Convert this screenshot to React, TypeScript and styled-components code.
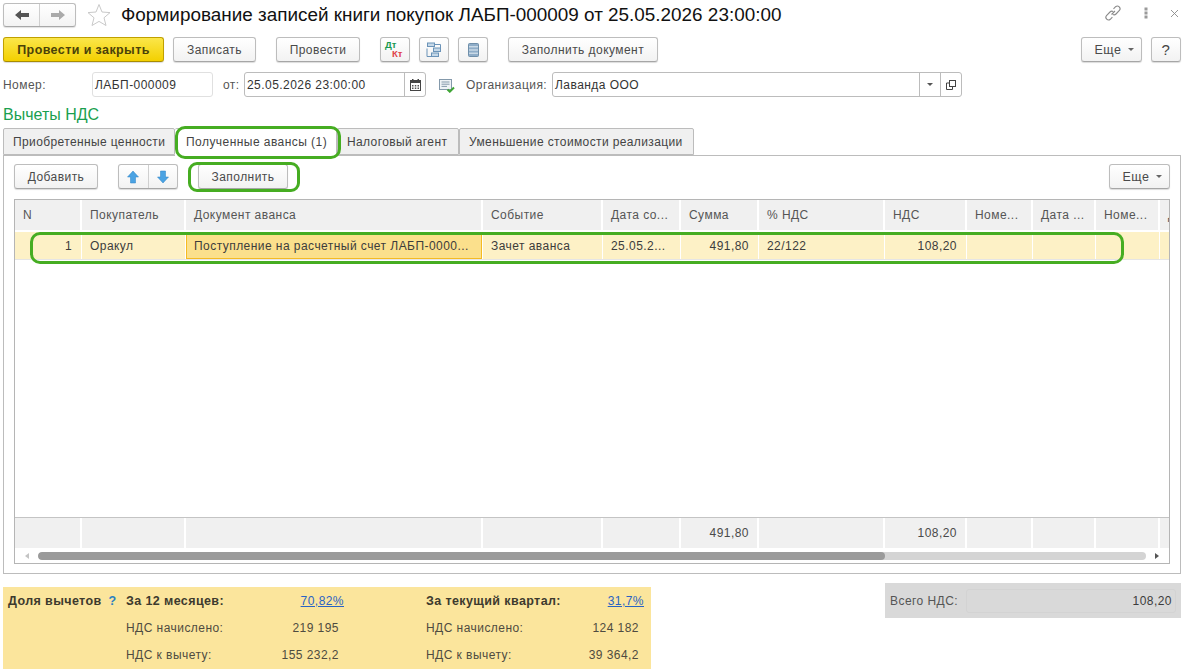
import React from "react";
import styled, { createGlobalStyle } from "styled-components";

const Global = createGlobalStyle`
  html, body { margin: 0; padding: 0; background: #fff; }
  body { font-family: "Liberation Sans", Arial, sans-serif; font-size: 12px; color: #4a4a4a; }
  * { box-sizing: border-box; }
`;

const Page = styled.div`
  position: relative;
  width: 1187px;
  height: 672px;
  overflow: hidden;
  padding: 3px 6px 0 3px;
`;

const TitleBar = styled.div`
  display: flex;
  align-items: center;
  height: 23px;
`;
const NavGroup = styled.div`
  display: flex;
  flex: none;
  width: 73px;
  height: 24px;
  border: 1px solid #bdbdbd;
  border-bottom-color: #a8a8a8;
  border-radius: 3px;
  background: linear-gradient(#fff, #f3f3f3);
  box-shadow: 0 1px 1px rgba(0, 0, 0, 0.12);
`;
const NavCell = styled.div<{ $divider?: boolean }>`
  flex: 1;
  display: flex;
  align-items: center;
  justify-content: center;
  border-left: ${(p) => (p.$divider ? "1px solid #cfcfcf" : "none")};
`;
const StarWrap = styled.div`
  display: flex;
  flex: none;
  margin-left: 11px;
  width: 24px;
`;
const Title = styled.h1`
  margin: 0 0 0 10px;
  font-size: 18.9px;
  font-weight: 400;
  color: #111;
  white-space: nowrap;
  flex: 1;
`;
const WindowIcons = styled.div`
  display: flex;
  align-items: center;
  gap: 22px;
  margin-right: 2px;
  margin-top: -3px;
`;

const Toolbar = styled.div`
  display: flex;
  align-items: flex-start;
  margin-top: 11px;
  height: 25px;
`;
const Btn = styled.div<{ $w: number; $ml?: number; $primary?: boolean }>`
  display: flex;
  align-items: center;
  justify-content: center;
  flex: none;
  width: ${(p) => p.$w}px;
  height: 25px;
  margin-left: ${(p) => p.$ml ?? 0}px;
  border: 1px solid ${(p) => (p.$primary ? "#c0a000" : "#bdbdbd")};
  border-bottom-color: ${(p) => (p.$primary ? "#a88c00" : "#a6a6a6")};
  border-radius: 3px;
  background: ${(p) => (p.$primary ? "linear-gradient(#fbe64a, #f3d000)" : "linear-gradient(#fff, #f2f2f2)")};
  box-shadow: 0 1px 1px rgba(0, 0, 0, 0.14);
  color: ${(p) => (p.$primary ? "#4a4209" : "#4a4a4a")};
  font-weight: ${(p) => (p.$primary ? 700 : 400)};
  font-size: ${(p) => (p.$primary ? 12.5 : 12)}px;
  letter-spacing: ${(p) => (p.$primary ? 0.4 : 0.45)}px;
  white-space: nowrap;
`;
const MoreLabel = styled.span`
  margin-left: 5px;
  font-size: 12.5px;
  letter-spacing: 0.6px;
`;
const Help = styled.span`
  font-size: 15px;
  color: #444;
`;
const Spacer = styled.div`
  flex: 1;
`;
const Caret = styled.span`
  display: inline-block;
  margin-left: 6px;
  width: 0;
  height: 0;
  border-left: 3px solid transparent;
  border-right: 3px solid transparent;
  border-top: 3px solid #666;
`;
const DtKt = styled.div`
  position: relative;
  width: 24px;
  height: 21px;
  font-weight: 700;
  font-size: 9.5px;
  line-height: 9px;
  letter-spacing: 0;
`;
const Dt = styled.span`
  position: absolute;
  left: 2px;
  top: 1px;
  color: #1a9a50;
`;
const Kt = styled.span`
  position: absolute;
  left: 9px;
  top: 10px;
  color: #e0434b;
`;

const FormRow = styled.div`
  display: flex;
  align-items: center;
  margin-top: 10px;
  height: 25px;
`;
const Label = styled.span<{ $w?: number; $ml?: number }>`
  flex: none;
  width: ${(p) => (p.$w ? `${p.$w}px` : "auto")};
  margin-left: ${(p) => p.$ml ?? 0}px;
  color: #555;
  letter-spacing: 0.45px;
  white-space: nowrap;
`;
const Input = styled.div<{ $w: number; $muted?: boolean }>`
  display: flex;
  align-items: stretch;
  flex: none;
  width: ${(p) => p.$w}px;
  height: 25px;
  border: 1px solid ${(p) => (p.$muted ? "#e0e0e0" : "#bcbcbc")};
  border-radius: 3px;
  background: #fff;
  color: #333;
  letter-spacing: 0.45px;
`;
const InputText = styled.div`
  flex: 1;
  display: flex;
  align-items: center;
  padding-left: 2px;
`;
const InputBtn = styled.div`
  flex: none;
  width: 21px;
  display: flex;
  align-items: center;
  justify-content: center;
  border-left: 1px solid #bcbcbc;
`;
const ArrowDown = styled(Caret)`
  margin: 0;
  border-top-color: #555;
`;
const IconSlot = styled.div`
  display: flex;
  flex: none;
  width: 16px;
  margin-left: 13px;
  margin-top: 2px;
`;

const Section = styled.div`
  margin-top: 8px;
  height: 23px;
  color: #1a9f4f;
  font-size: 16px;
  line-height: 20px;
`;
const Tabs = styled.div`
  display: flex;
  height: 27px;
`;
const Tab = styled.div<{ $w: number; $active?: boolean }>`
  flex: none;
  width: ${(p) => p.$w}px;
  height: ${(p) => (p.$active ? 28 : 27)}px;
  display: flex;
  align-items: center;
  padding-left: ${(p) => (p.$active ? 11 : 9)}px;
  border: 1px solid #bcbcbc;
  border-left-width: ${(p) => (p.$active ? 0 : 1)}px;
  border-bottom-color: ${(p) => (p.$active ? "#fff" : "#bcbcbc")};
  border-radius: 2px 2px 0 0;
  background: ${(p) => (p.$active ? "#fff" : "#f0f0f0")};
  color: #444;
  letter-spacing: ${(p) => (p.$active ? 0.45 : 0.38)}px;
  position: relative;
  z-index: ${(p) => (p.$active ? 1 : 0)};
  white-space: nowrap;
`;
const Panel = styled.div`
  width: 1178px;
  height: 419px;
  border: 1px solid #bcbcbc;
  padding: 8px 10px 9px;
  display: flex;
  flex-direction: column;
`;
const PanelBar = styled.div`
  display: flex;
  height: 26px;
  flex: none;
`;
const SplitCell = styled.div<{ $divider?: boolean }>`
  flex: 1;
  height: 100%;
  display: flex;
  align-items: center;
  justify-content: center;
  border-left: ${(p) => (p.$divider ? "1px solid #cfcfcf" : "none")};
`;

const TableBox = styled.div`
  margin-top: 9px;
  flex: 1;
  display: flex;
  flex-direction: column;
  border: 1px solid #b5b5b5;
  overflow: hidden;
  min-height: 0;
`;
const COLS = "67px 104px 297px 120px 78px 78px 126px 82px 66px 63px 64px 11px";
const HeadRow = styled.div`
  display: grid;
  grid-template-columns: ${COLS};
  height: 30px;
  flex: none;
`;
const HeadCell = styled.div`
  background: #f0f0f0;
  border-right: 2px solid #fff;
  display: flex;
  align-items: center;
  padding-left: 8px;
  color: #555;
  letter-spacing: 0.45px;
  white-space: nowrap;
  overflow: hidden;
`;
const BodyRow = styled.div`
  display: grid;
  grid-template-columns: ${COLS};
  height: 28px;
  flex: none;
  border-bottom: 1px solid #e5e5e5;
  margin-top: 2px;
`;
const Cell = styled.div<{ $right?: boolean; $current?: boolean }>`
  display: flex;
  align-items: center;
  justify-content: ${(p) => (p.$right ? "flex-end" : "flex-start")};
  padding: 0 ${(p) => (p.$right ? 9 : 6)}px 0 ${(p) => (p.$current ? 7 : 8)}px;
  margin-right: ${(p) => (p.$current ? 1 : 0)}px;
  background: ${(p) => (p.$current ? "#fbe08c" : "#fdf1c6")};
  border: ${(p) => (p.$current ? "1px solid #f5bb22" : "none")};
  border-right: ${(p) => (p.$current ? "1px solid #f5bb22" : "1px solid #fff")};
  color: #3c3c3c;
  letter-spacing: 0.45px;
  white-space: nowrap;
  overflow: hidden;
`;
const BodyFill = styled.div`
  flex: 1;
  background: #fff;
  border-bottom: 1px solid #c4c4c4;
`;
const FootRow = styled.div`
  display: grid;
  grid-template-columns: ${COLS};
  height: 30px;
  flex: none;
`;
const FootCell = styled.div`
  background: #f0f0f0;
  border-right: 2px solid #fff;
  display: flex;
  align-items: center;
  justify-content: flex-end;
  padding-right: 8px;
  letter-spacing: 0.45px;
  color: #4a4a4a;
`;
const ScrollRow = styled.div`
  flex: none;
  height: 15px;
  display: flex;
  align-items: center;
  padding: 0 10px;
`;
const Track = styled.div`
  flex: 1;
  height: 8px;
  margin: 0 9px;
  background: #d4d4d4;
  border-radius: 4px;
  overflow: hidden;
`;
const Thumb = styled.div`
  height: 100%;
  background: #9a9a9a;
  border-radius: 4px;
`;
const ArrowL = styled.div`
  width: 0;
  height: 0;
  border-top: 3px solid transparent;
  border-bottom: 3px solid transparent;
  border-right: 4px solid #c4c4c4;
`;
const ArrowR = styled.div`
  width: 0;
  height: 0;
  border-top: 3px solid transparent;
  border-bottom: 3px solid transparent;
  border-left: 4px solid #555;
`;

const Bottom = styled.div`
  display: flex;
  align-items: flex-start;
  margin-top: 9px;
`;
const Shares = styled.div`
  width: 648px;
  height: 82px;
  margin-top: 4px;
  background: #fbe59c;
  display: grid;
  grid-template-columns: 123px 218px 82px 218px;
  grid-auto-rows: 27px;
  letter-spacing: 0.45px;
`;
const SCell = styled.div<{ $bold?: boolean; $right?: boolean }>`
  display: flex;
  align-items: center;
  justify-content: ${(p) => (p.$right ? "flex-end" : "flex-start")};
  font-weight: ${(p) => (p.$bold ? 700 : 400)};
  font-size: ${(p) => (p.$bold ? 12.5 : 12)}px;
  letter-spacing: ${(p) => (p.$bold ? 0.4 : 0.45)}px;
  color: ${(p) => (p.$bold ? "#3d3a2e" : "#4e4b40")};
  white-space: nowrap;
`;
const ShareHead = styled(SCell)`
  padding-left: 5px;
`;
const Q = styled.span`
  margin-left: 7px;
  color: #2a7fc0;
  font-weight: 700;
`;
const Pair = styled.div`
  display: grid;
  grid-template-columns: 1fr auto;
  padding-right: 5px;
`;
const LinkPair = styled(Pair)`
  padding-right: 0;
`;
const Lnk = styled.a`
  color: #2a63c4;
  text-decoration: underline;
  align-self: center;
`;
const Total = styled.div`
  margin-left: auto;
  width: 296px;
  height: 35px;
  background: #d9d9d9;
  display: flex;
  align-items: center;
  padding: 0 5px;
  color: #555;
  letter-spacing: 0.45px;
`;
const TotalLabel = styled.span`
  flex: none;
  width: 76px;
  white-space: nowrap;
`;
const TotalValue = styled.div`
  flex: 1;
  height: 24px;
  border: 1px solid #d3d3d3;
  border-radius: 3px;
  display: flex;
  align-items: center;
  justify-content: flex-end;
  padding-right: 3px;
  color: #3c3c3c;
`;

const Mark = styled.div<{ $l: number; $t: number; $w: number; $h: number; $r: number }>`
  position: absolute;
  left: ${(p) => p.$l}px;
  top: ${(p) => p.$t}px;
  width: ${(p) => p.$w}px;
  height: ${(p) => p.$h}px;
  border: 3px solid #46ad22;
  border-radius: ${(p) => p.$r}px;
  pointer-events: none;
  z-index: 3;
`;

const ArrowLeftIcon = ({ c }: { c: string }) => (
  <svg width="16" height="12" viewBox="0 0 16 12">
    <path d="M1 6 L7 1 V4 H15 V8 H7 V11 Z" fill={c} />
  </svg>
);
const ArrowRightIcon = ({ c }: { c: string }) => (
  <svg width="16" height="12" viewBox="0 0 16 12">
    <path d="M15 6 L9 1 V4 H1 V8 H9 V11 Z" fill={c} />
  </svg>
);
const StarIcon = () => (
  <svg width="24" height="24" viewBox="0 0 24 24">
    <path d="M12 1.5 L15 9 L23 9.6 L17 14.8 L19 22.5 L12 18.4 L5 22.5 L7 14.8 L1 9.6 L9 9 Z" fill="#fff" stroke="#c9c9c9" />
  </svg>
);
const LinkIcon = () => (
  <svg width="18" height="18" viewBox="0 0 18 18" fill="none" stroke="#8a8a8a" strokeWidth="1.1">
    <path d="M7.5 10.5 L11 7" />
    <path d="M9.5 4.8 L11.6 2.7 a2.7 2.7 0 0 1 3.8 3.8 L12 10 a2.7 2.7 0 0 1 -3.3 .4" />
    <path d="M8.4 13.2 L6.3 15.3 a2.7 2.7 0 0 1 -3.8 -3.8 L6 8 a2.7 2.7 0 0 1 3.3 -.4" />
  </svg>
);
const DotsIcon = () => (
  <svg width="4" height="12" viewBox="0 0 4 12" fill="#9a9a9a">
    <rect x="0.5" y="0.5" width="3" height="3" />
    <rect x="0.5" y="4.5" width="3" height="3" />
    <rect x="0.5" y="8.5" width="3" height="3" />
  </svg>
);
const CloseIcon = () => (
  <svg width="9" height="9" viewBox="0 0 9 9" stroke="#8a8a8a" strokeWidth="0.9">
    <path d="M1 1 L8 8 M8 1 L1 8" />
  </svg>
);
const StructureIcon = () => (
  <svg width="16" height="16" viewBox="0 0 16 16" fill="none">
    <rect x="1.5" y="1" width="7" height="3.5" fill="#c5d8e8" stroke="#6b93b8" />
    <rect x="7.5" y="6" width="7" height="3.5" fill="#c5d8e8" stroke="#6b93b8" />
    <rect x="5.5" y="11" width="7" height="3.5" fill="#c5d8e8" stroke="#6b93b8" />
    <path d="M8.5 2.5 H14.5 V6 M1 6.5 V14.5 H5" stroke="#6b93b8" />
  </svg>
);
const ListIcon = () => (
  <svg width="11" height="14" viewBox="0 0 11 14">
    <rect x="0.5" y="0.5" width="10" height="13" rx="1" fill="#8fadc8" stroke="#6f8faa" />
    <path d="M1 3.8 H10 M1 7 H10 M1 10.2 H10" stroke="#e4edf4" />
  </svg>
);
const CalendarIcon = () => (
  <svg width="11" height="12" viewBox="0 0 11 12">
    <rect x="0.5" y="1.5" width="10" height="10" fill="#fff" stroke="#444" />
    <rect x="0" y="1" width="11" height="3" fill="#444" />
    <rect x="2" y="0" width="1.5" height="2" fill="#444" />
    <rect x="7.5" y="0" width="1.5" height="2" fill="#444" />
    <path d="M2 6h1.5v1.5H2zM4.8 6h1.5v1.5H4.8zM7.5 6H9v1.5H7.5zM2 8.5h1.5V10H2zM4.8 8.5h1.5V10H4.8zM7.5 8.5H9V10H7.5z" fill="#555" />
  </svg>
);
const DocCheckIcon = () => (
  <svg width="16" height="14" viewBox="0 0 16 14">
    <rect x="0.5" y="0.5" width="12" height="10" fill="#eef2f6" stroke="#8499ab" />
    <path d="M2.5 3 H10.5 M2.5 5.2 H10.5 M2.5 7.4 H8" stroke="#8499ab" />
    <path d="M8.5 10.5 L10.8 12.7 L15 8.5" fill="none" stroke="#3fa535" strokeWidth="2" />
  </svg>
);
const OpenIcon = () => (
  <svg width="10" height="10" viewBox="0 0 10 10" fill="none" stroke="#444">
    <rect x="3.5" y="0.5" width="6" height="6" />
    <path d="M3.5 3 H0.5 V9.5 H6.5 V6.5" />
  </svg>
);
const UpIcon = () => (
  <svg width="12" height="14" viewBox="0 0 12 14">
    <path d="M6 1 L11.5 7 H8.5 V13 H3.5 V7 H0.5 Z" fill="#4ba3e3" stroke="#2d82c4" strokeWidth="0.5" />
  </svg>
);
const DownIcon = () => (
  <svg width="12" height="14" viewBox="0 0 12 14">
    <path d="M6 13 L11.5 7 H8.5 V1 H3.5 V7 H0.5 Z" fill="#4ba3e3" stroke="#2d82c4" strokeWidth="0.5" />
  </svg>
);

const heads = ["N", "Покупатель", "Документ аванса", "Событие", "Дата со...", "Сумма", "% НДС", "НДС", "Номе...", "Дата ...", "Номе...", "Д"];

export default function App() {
  return (
    <Page>
      <Global />
      <TitleBar>
        <NavGroup>
          <NavCell><ArrowLeftIcon c="#555" /></NavCell>
          <NavCell $divider><ArrowRightIcon c="#aaa" /></NavCell>
        </NavGroup>
        <StarWrap><StarIcon /></StarWrap>
        <Title>Формирование записей книги покупок ЛАБП-000009 от 25.05.2026 23:00:00</Title>
        <WindowIcons>
          <LinkIcon />
          <DotsIcon />
          <CloseIcon />
        </WindowIcons>
      </TitleBar>

      <Toolbar>
        <Btn $primary $w={161}>Провести и закрыть</Btn>
        <Btn $w={83} $ml={9}>Записать</Btn>
        <Btn $w={84} $ml={20}>Провести</Btn>
        <Btn $w={30} $ml={20}>
          <DtKt><Dt>Дт</Dt><Kt>Кт</Kt></DtKt>
        </Btn>
        <Btn $w={30} $ml={9}><StructureIcon /></Btn>
        <Btn $w={30} $ml={9}><ListIcon /></Btn>
        <Btn $w={150} $ml={20}>Заполнить документ</Btn>
        <Spacer />
        <Btn $w={61}><MoreLabel>Еще</MoreLabel><Caret /></Btn>
        <Btn $w={30} $ml={9}><Help>?</Help></Btn>
      </Toolbar>

      <FormRow>
        <Label $w={89}>Номер:</Label>
        <Input $w={121} $muted><InputText>ЛАБП-000009</InputText></Input>
        <Label $ml={10} $w={21}>от:</Label>
        <Input $w={182}>
          <InputText>25.05.2026 23:00:00</InputText>
          <InputBtn><CalendarIcon /></InputBtn>
        </Input>
        <IconSlot><DocCheckIcon /></IconSlot>
        <Label $ml={11} $w={86}>Организация:</Label>
        <Input $w={410}>
          <InputText>Лаванда ООО</InputText>
          <InputBtn><ArrowDown /></InputBtn>
          <InputBtn><OpenIcon /></InputBtn>
        </Input>
      </FormRow>

      <Section>Вычеты НДС</Section>
      <Tabs>
        <Tab $w={172}>Приобретенные ценности</Tab>
        <Tab $w={162} $active>Полученные авансы (1)</Tab>
        <Tab $w={122}>Налоговый агент</Tab>
        <Tab $w={235}>Уменьшение стоимости реализации</Tab>
      </Tabs>
      <Panel>
        <PanelBar>
          <Btn $w={84}>Добавить</Btn>
          <Btn $w={60} $ml={20}>
            <SplitCell><UpIcon /></SplitCell>
            <SplitCell $divider><DownIcon /></SplitCell>
          </Btn>
          <Btn $w={90} $ml={20}>Заполнить</Btn>
          <Spacer />
          <Btn $w={61}><MoreLabel>Еще</MoreLabel><Caret /></Btn>
        </PanelBar>
        <TableBox>
          <HeadRow>
            {heads.map((h, i) => <HeadCell key={i}>{h}</HeadCell>)}
          </HeadRow>
          <BodyRow>
            <Cell $right>1</Cell>
            <Cell>Оракул</Cell>
            <Cell $current>Поступление на расчетный счет ЛАБП-0000...</Cell>
            <Cell>Зачет аванса</Cell>
            <Cell>25.05.2...</Cell>
            <Cell $right>491,80</Cell>
            <Cell>22/122</Cell>
            <Cell $right>108,20</Cell>
            <Cell /><Cell /><Cell /><Cell />
          </BodyRow>
          <BodyFill />
          <FootRow>
            {heads.map((h, i) => (
              <FootCell key={i}>{i === 5 ? "491,80" : i === 7 ? "108,20" : ""}</FootCell>
            ))}
          </FootRow>
          <ScrollRow>
            <ArrowL />
            <Track><Thumb style={{ width: `${(847 / 1108) * 100}%` }} /></Track>
            <ArrowR />
          </ScrollRow>
        </TableBox>
      </Panel>

      <Bottom>
        <Shares>
          <ShareHead $bold>Доля вычетов<Q>?</Q></ShareHead>
          <LinkPair>
            <SCell $bold>За 12 месяцев:</SCell>
            <Lnk href="#">70,82%</Lnk>
          </LinkPair>
          <SCell />
          <LinkPair>
            <SCell $bold>За текущий квартал:</SCell>
            <Lnk href="#">31,7%</Lnk>
          </LinkPair>
          <SCell />
          <Pair>
            <SCell>НДС начислено:</SCell>
            <SCell $right>219 195</SCell>
          </Pair>
          <SCell />
          <Pair>
            <SCell>НДС начислено:</SCell>
            <SCell $right>124 182</SCell>
          </Pair>
          <SCell />
          <Pair>
            <SCell>НДС к вычету:</SCell>
            <SCell $right>155 232,2</SCell>
          </Pair>
          <SCell />
          <Pair>
            <SCell>НДС к вычету:</SCell>
            <SCell $right>39 364,2</SCell>
          </Pair>
        </Shares>
        <Total>
          <TotalLabel>Всего НДС:</TotalLabel>
          <TotalValue>108,20</TotalValue>
        </Total>
      </Bottom>

      <Mark $l={175} $t={126} $w={166} $h={33} $r={10} />
      <Mark $l={188} $t={162} $w={112} $h={30} $r={9} />
      <Mark $l={30} $t={232} $w={1094} $h={32} $r={10} />
    </Page>
  );
}
